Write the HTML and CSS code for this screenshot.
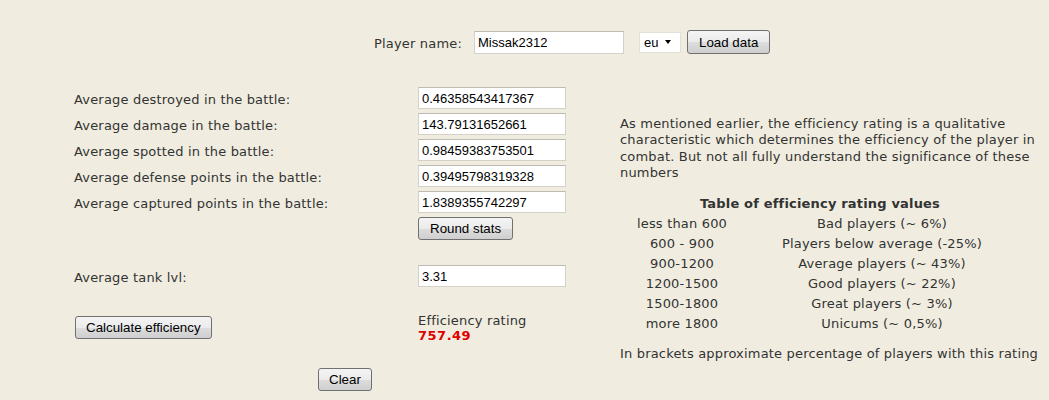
FILE: index.html
```html
<!DOCTYPE html>
<html>
<head>
<meta charset="utf-8">
<link rel="stylesheet" href="styles.css">
</head>
<body>
<div class="page">
  <div class="top">
    <span class="lbl top-lbl">Player name:</span>
    <input class="field name-field" type="text" value="Missak2312">
    <div class="select">eu <span class="arrow"></span></div>
    <button class="btn">Load data</button>
  </div>
  <div class="main">
    <div class="left">
      <div class="stats">
        <span class="lbl">Average destroyed in the battle:</span><input class="field" type="text" value="0.46358543417367">
        <span class="lbl">Average damage in the battle:</span><input class="field" type="text" value="143.79131652661">
        <span class="lbl">Average spotted in the battle:</span><input class="field" type="text" value="0.98459383753501">
        <span class="lbl">Average defense points in the battle:</span><input class="field" type="text" value="0.39495798319328">
        <span class="lbl">Average captured points in the battle:</span><input class="field" type="text" value="1.8389355742297">
        <span></span><div><button class="btn">Round stats</button></div>
      </div>
      <div class="stats tank">
        <span class="lbl">Average tank lvl:</span><input class="field" type="text" value="3.31">
      </div>
      <div class="calc">
        <div class="calc-btn"><button class="btn">Calculate efficiency</button></div>
        <div class="result">
          <div class="lbl">Efficiency rating</div>
          <div class="value">757.49</div>
        </div>
      </div>
      <div class="clear-row"><button class="btn">Clear</button></div>
    </div>
    <div class="right">
      <p class="desc">As mentioned earlier, the efficiency rating is a qualitative characteristic which determines the efficiency of the player in combat. But not all fully understand the significance of these numbers</p>
      <div class="table">
        <div class="thead">Table of efficiency rating values</div>
        <span>less than 600</span><span>Bad players (~ 6%)</span>
        <span>600 - 900</span><span>Players below average (-25%)</span>
        <span>900-1200</span><span>Average players (~ 43%)</span>
        <span>1200-1500</span><span>Good players (~ 22%)</span>
        <span>1500-1800</span><span>Great players (~ 3%)</span>
        <span>more 1800</span><span>Unicums (~ 0,5%)</span>
      </div>
      <p class="note">In brackets approximate percentage of players with this rating</p>
    </div>
  </div>
</div>
</body>
</html>
```
FILE: styles.css
```css
html, body {
  margin: 0;
  padding: 0;
  background: #f0ede0;
}
.page {
  font-family: "DejaVu Sans", Verdana, sans-serif;
  font-size: 13px;
  letter-spacing: 0.18px;
  color: #333;
  height: 400px;
  overflow: hidden;
}
.lbl {
  font-family: "DejaVu Sans", Verdana, sans-serif;
  font-size: 13px;
  color: #333;
  padding-top: 2px;
}
.top {
  display: flex;
  align-items: center;
  padding: 30px 0 0 374px;
  height: 24px;
}
.top-lbl { width: 100px; }
.field {
  box-sizing: border-box;
  width: 148px;
  height: 22px;
  margin: 0;
  padding: 1px 3px 0;
  border: 1px solid #d4d2c8;
  border-top-color: #bdbbb2;
  background: #fff;
  font-family: "Liberation Sans", Arial, sans-serif;
  font-size: 13px;
  letter-spacing: 0;
  color: #000;
  outline: none;
}
.name-field {
  width: 150px;
  height: 23px;
}
.select {
  box-sizing: border-box;
  margin-left: 15px;
  width: 42px;
  height: 21px;
  background: #fff;
  border: 1px solid #e2e0d8;
  font-family: "Liberation Sans", Arial, sans-serif;
  font-size: 13px;
  letter-spacing: 0;
  color: #000;
  display: flex;
  align-items: center;
  padding-left: 4px;
  gap: 7px;
}
.arrow {
  width: 0;
  height: 0;
  border-left: 3.5px solid transparent;
  border-right: 3.5px solid transparent;
  border-top: 4px solid #000;
}
.btn {
  box-sizing: border-box;
  margin: 0 0 0 6px;
  height: 24px;
  padding: 0 11px;
  border: 1px solid #707070;
  border-radius: 3px;
  background: linear-gradient(#f4f4f4 0%, #ebebeb 50%, #dddddd 51%, #cfcfcf 100%);
  font-family: "Liberation Sans", Arial, sans-serif;
  font-size: 13.33px;
  letter-spacing: 0;
  color: #000;
}
.main {
  display: flex;
  padding: 33px 0 0 74px;
}
.left {
  width: 546px;
  flex: none;
}
.stats {
  display: grid;
  grid-template-columns: 344px 148px;
  grid-auto-rows: 22px;
  row-gap: 4px;
  align-items: center;
}
.stats .btn {
  margin: 1px 0 0 0;
  height: 23px;
  padding: 0 11px;
}
.tank {
  margin-top: 26px;
}
.calc {
  display: flex;
  margin-top: 24px;
  height: 28px;
}
.calc-btn {
  width: 344px;
  padding-top: 5px;
}
.calc-btn .btn {
  margin: 0 0 0 1px;
  height: 23px;
  padding: 0 10px;
}
.result .lbl { line-height: 15px; }
.value {
  color: #e00000;
  font-weight: bold;
  font-size: 13px;
  line-height: 15px;
  letter-spacing: 0.5px;
}
.clear-row {
  display: flex;
  margin-top: 29px;
  padding-left: 244px;
}
.clear-row .btn {
  margin: 0;
  height: 23px;
  padding: 0 10px;
}
.right {
  width: 425px;
  padding-top: 29px;
}
.desc {
  margin: 0;
  line-height: 16.3px;
}
.table {
  display: grid;
  grid-template-columns: 124px 276px;
  grid-auto-rows: 20px;
  align-items: center;
  text-align: center;
  margin-top: 12px;
  width: 400px;
}
.thead {
  grid-column: 1 / 3;
  font-weight: bold;
}
.note {
  margin: 13px 0 0;
}
```
